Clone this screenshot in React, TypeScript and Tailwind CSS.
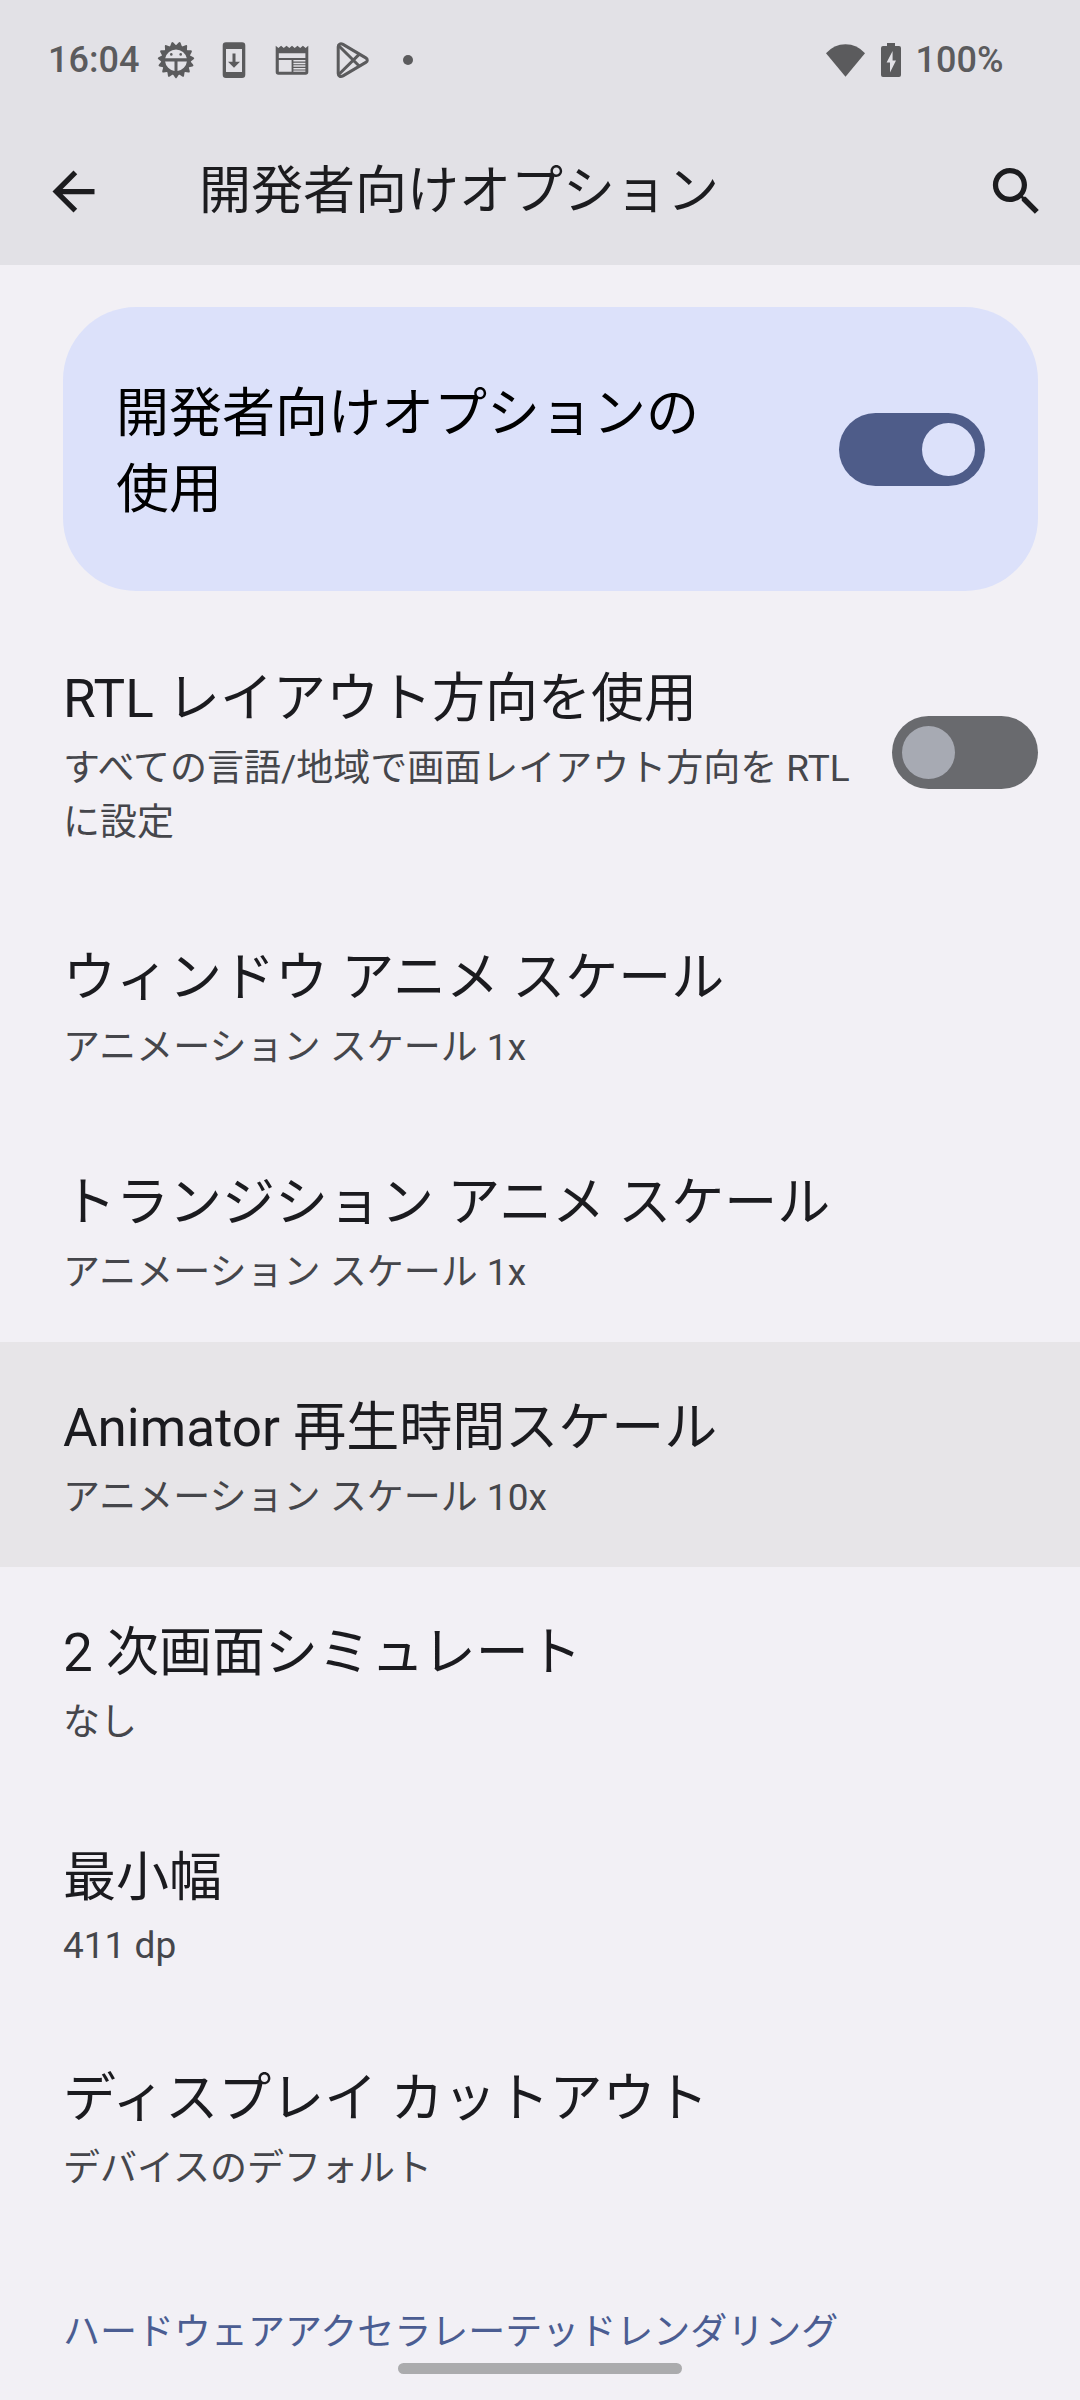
import { useState } from 'react'
import clsx from 'clsx'

type Setting = {
  title: string
  summary: string
  active?: boolean
  latin?: boolean
}

const settings: Setting[] = [
  { title: 'ウィンドウ アニメ スケール', summary: 'アニメーション スケール 1x' },
  { title: 'トランジション アニメ スケール', summary: 'アニメーション スケール 1x' },
  { title: 'Animator 再生時間スケール', summary: 'アニメーション スケール 10x', active: true },
  { title: '2 次画面シミュレート', summary: 'なし' },
  { title: '最小幅', summary: '411 dp', latin: true },
  { title: 'ディスプレイ カットアウト', summary: 'デバイスのデフォルト' },
]

const teeth = Array.from({ length: 15 }, (_, i) => i * 24)

function DebugIcon() {
  return (
    <svg viewBox="0 0 40 40" className="size-10" fill="currentColor" aria-hidden="true">
      {teeth.map((angle) => (
        <path
          key={angle}
          d="M16.4 33.5L19 37.6Q20 39.2 21 37.6L23.6 33.5Z"
          transform={`rotate(${angle} 20 20)`}
        />
      ))}
      <path
        fillRule="evenodd"
        d="M20 5.3a14.7 14.7 0 1 1 0 29.4a14.7 14.7 0 0 1 0-29.4ZM9.2 18.3H30.8A11 11 0 0 0 9.2 18.3ZM9.1 21.4A11 11 0 0 0 18.5 31V21.4ZM30.9 21.4H21.5V31A11 11 0 0 0 30.9 21.4Z"
      />
      <circle cx="15.3" cy="14.4" r="1.3" />
      <circle cx="24.7" cy="14.4" r="1.3" />
    </svg>
  )
}

function UpdateIcon() {
  return (
    <svg viewBox="0 0 40 40" className="size-10" fill="currentColor" aria-hidden="true">
      <path
        fillRule="evenodd"
        d="M12 2.3H28A3.3 3.3 0 0 1 31.3 5.6V34.7A3.3 3.3 0 0 1 28 38H12A3.3 3.3 0 0 1 8.7 34.7V5.6A3.3 3.3 0 0 1 12 2.3ZM12 9V32H28V9Z"
      />
      <path d="M18.5 13.5H21.5V21.7H26L20 27.7L14 21.7H18.5Z" />
    </svg>
  )
}

function NewsIcon() {
  return (
    <svg viewBox="0 0 40 40" className="size-10" fill="currentColor" aria-hidden="true">
      <path
        fillRule="evenodd"
        d="M3.7 5.7L6.4 8L9.1 5.7L11.8 8L14.5 5.7L17.3 8L20 5.7L22.7 8L25.5 5.7L28.2 8L30.9 5.7L33.6 8L36.3 5.7V32A2.7 2.7 0 0 1 33.6 34.7H6.4A2.7 2.7 0 0 1 3.7 32ZM6.8 13.3V18H33.4V13.3ZM6.8 20V31.8H19.6V20ZM21.4 20V21.5H33.4V20ZM21.4 22.7V24.2H33.4V22.7ZM21.4 25.3V26.8H33.4V25.3ZM21.4 27.9V29.4H33.4V27.9ZM21.4 30.4V31.8H33.4V30.4Z"
      />
    </svg>
  )
}

function PlayIcon() {
  return (
    <svg
      viewBox="0 0 40 40"
      className="size-10"
      fill="none"
      stroke="currentColor"
      strokeWidth="3"
      strokeLinejoin="round"
      aria-hidden="true"
    >
      <path d="M8.2 6.8V33.5C8.2 36.4 10.7 37.2 13 35.9L35.8 22.4C37.8 21.2 37.8 19.1 35.8 17.9L13 4.4C10.7 3.1 8.2 3.9 8.2 6.8Z" />
      <path d="M9 6L29.4 26.2M9 34.3L29.4 14.1" />
    </svg>
  )
}

function WifiIcon() {
  return (
    <svg viewBox="0 0 39 33" className="h-[33px] w-[39px]" fill="currentColor" aria-hidden="true">
      <path d="M0 9.3Q8 .3 19.5 .3T39 9.3L19.5 32.7Z" />
    </svg>
  )
}

function BatteryIcon() {
  return (
    <svg viewBox="0 0 20 34" className="h-[34px] w-5" fill="currentColor" aria-hidden="true">
      <path
        fillRule="evenodd"
        d="M6 0H14V3H18A2 2 0 0 1 20 5V32A2 2 0 0 1 18 34H2A2 2 0 0 1 0 32V5A2 2 0 0 1 2 3H6ZM11.6 8L5.6 19.4H9V29.5L15 17.4H11.6Z"
      />
    </svg>
  )
}

function StatusBar() {
  return (
    <div className="flex h-[120px] items-center justify-between pr-[74px] pl-12 text-4xl font-medium text-[#5b5b5d]">
      <div className="flex items-center gap-[18px]">
        <span className="w-[90px] whitespace-nowrap">16:04</span>
        <DebugIcon />
        <UpdateIcon />
        <NewsIcon />
        <PlayIcon />
        <span className="ml-[15px] size-2.5 rounded-full bg-current" />
      </div>
      <div className="flex items-center">
        <WifiIcon />
        <span className="ml-4 flex">
          <BatteryIcon />
        </span>
        <span className="ml-3 w-[93px] text-center whitespace-nowrap">100%</span>
      </div>
    </div>
  )
}

function AppBar() {
  return (
    <div className="flex h-[145px] items-center pr-8 pb-0.5 pl-[42px] text-[#1c1c1f]">
      <button type="button" aria-label="戻る" className="shrink-0">
        <svg viewBox="0 0 24 24" className="size-[63px]" fill="currentColor">
          <path d="M20 11H7.83l5.59-5.59L12 4l-8 8 8 8 1.41-1.41L7.83 13H20z" />
        </svg>
      </button>
      <h1 className="ml-[94px] flex-1 text-[52px] leading-[76px]">開発者向けオプション</h1>
      <button type="button" aria-label="検索" className="shrink-0">
        <svg viewBox="0 0 24 24" className="size-[63px]" fill="currentColor">
          <path d="M15.5 14h-.79l-.28-.27C15.41 12.59 16 11.11 16 9.5 16 5.91 13.09 3 9.5 3S3 5.91 3 9.5 5.91 16 9.5 16c1.61 0 3.09-.59 4.23-1.57l.27.28v.79l5 4.99L20.49 19l-4.99-5zm-6 0C7.01 14 5 11.99 5 9.5S7.01 5 9.5 5 14 7.01 14 9.5 11.99 14 9.5 14z" />
        </svg>
      </button>
    </div>
  )
}

type SwitchProps = {
  id: string
  checked: boolean
  onChange: (checked: boolean) => void
}

function Switch({ id, checked, onChange }: SwitchProps) {
  return (
    <span
      className={clsx(
        'relative flex h-[73px] w-[146px] shrink-0 items-center rounded-full px-[10px]',
        checked ? 'justify-end bg-[#4e5c89]' : 'justify-start bg-[#696a6e]',
      )}
    >
      <input
        id={id}
        type="checkbox"
        role="switch"
        checked={checked}
        onChange={(e) => onChange(e.target.checked)}
        className="absolute inset-0 size-full cursor-pointer appearance-none rounded-full"
      />
      <span
        className={clsx(
          'size-[53px] rounded-full',
          checked ? 'bg-[#dce1fa]' : 'bg-[#a7aab3]',
        )}
      />
    </span>
  )
}

function SettingRow({ title, summary, active, latin }: Setting) {
  return (
    <button
      type="button"
      className={clsx(
        'block w-full px-[63px] pt-12 pb-[42px] text-left',
        active && 'bg-[#e7e5e8]',
      )}
    >
      <span className="block text-[53px] leading-[76px] text-[#1b1b1f]">{title}</span>
      <span
        className={clsx(
          'mt-[5px] block text-[37px] text-[#45464b]',
          latin ? 'leading-[50px]' : 'leading-[54px]',
        )}
      >
        {summary}
      </span>
    </button>
  )
}

export default function App() {
  const [enabled, setEnabled] = useState(true)
  const [rtl, setRtl] = useState(false)

  return (
    <div
      lang="ja"
      className="min-h-screen bg-[#f2f0f5] font-[Roboto,'Noto_Sans_CJK_JP',sans-serif]"
    >
      <header className="bg-[#e2e1e6]">
        <StatusBar />
        <AppBar />
      </header>

      <main className="pt-[42px]">
        <div className="mr-[42px] ml-[63px] flex items-center justify-between rounded-[73px] bg-[#dce1fa] px-[53px] py-[63px]">
          <label
            htmlFor="developer-options"
            className="max-w-[600px] pt-1.5 text-[53px] leading-[76px] text-black"
          >
            開発者向けオプションの使用
          </label>
          <Switch id="developer-options" checked={enabled} onChange={setEnabled} />
        </div>

        <div className="mt-[22px] flex items-center justify-between py-[42px] pr-[42px] pl-[63px]">
          <label htmlFor="rtl-layout" className="max-w-[790px] pt-1.5">
            <span className="block text-[53px] leading-[76px] text-[#1b1b1f]">
              RTL レイアウト方向を使用
            </span>
            <span className="mt-[5px] block text-[37px] leading-[54px] text-[#45464b]">
              すべての言語/地域で画面レイアウト方向を RTL に設定
            </span>
          </label>
          <Switch id="rtl-layout" checked={rtl} onChange={setRtl} />
        </div>

        {settings.map((setting) => (
          <SettingRow key={setting.title} {...setting} />
        ))}

        <h2 className="px-[63px] pt-[68px] pb-10 text-[37px] leading-[54px] text-[#4b5d92]">
          ハードウェアアクセラレーテッドレンダリング
        </h2>
      </main>

      <div className="fixed bottom-[26px] left-1/2 h-[11px] w-[284px] -translate-x-1/2 rounded-full bg-[#ababad]" />
    </div>
  )
}
